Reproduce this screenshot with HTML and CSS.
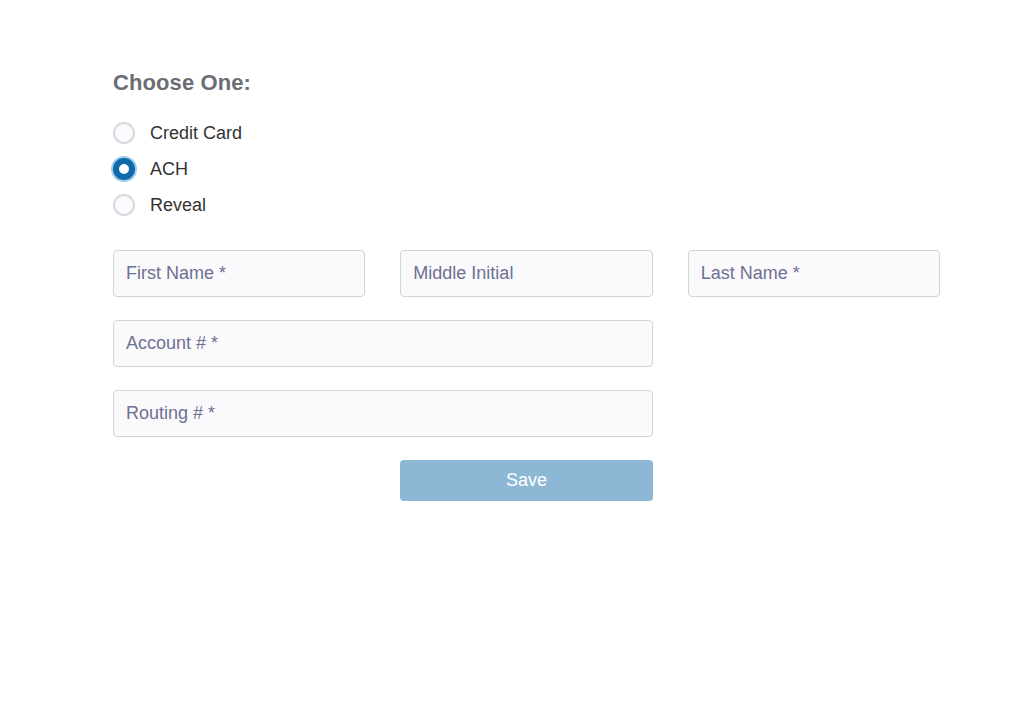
FILE: index.html
```html
<!DOCTYPE html>
<html>
<head>
<title>Payment Method</title>
<link rel="stylesheet" href="styles.css">
</head>
<body>

<form class="payment">
  <h3 class="title">Choose One:</h3>
  <div class="choices">
    <label class="choice"><input type="radio" name="method" value="card"> <span>Credit Card</span></label>
    <label class="choice"><input type="radio" name="method" value="ach" checked> <span>ACH</span></label>
    <label class="choice"><input type="radio" name="method" value="reveal"> <span>Reveal</span></label>
  </div>

  <div class="fields">
    <input type="text" class="field" placeholder="First Name *">
    <input type="text" class="field" placeholder="Middle Initial">
    <input type="text" class="field" placeholder="Last Name *">
    <input type="text" class="field wide" placeholder="Account # *">
    <input type="text" class="field wide" placeholder="Routing # *">
    <button type="button" class="save">Save</button>
  </div>
</form>

</body>
</html>
```

FILE: styles.css
```css
body {
  margin: 0;
  font-family: "Liberation Sans", Arial, sans-serif;
  background-color: #fff;
}
.payment {
  width: 827px;
  margin-left: 113px;
  padding-top: 70px;
}
.title {
  margin: 0 0 26px 0;
  font-size: 22px;
  font-weight: bold;
  color: #6b6d74;
  letter-spacing: 0.1px;
}
.choices {
  display: flex;
  flex-direction: column;
  gap: 14px;
}
.choice {
  display: flex;
  align-items: center;
  gap: 15px;
  font-size: 18px;
  color: #333;
  height: 22px;
}
.choice input {
  appearance: none;
  -webkit-appearance: none;
  margin: 0;
  width: 22px;
  height: 22px;
  border: 2px solid #d5d8de;
  border-radius: 50%;
  background-color: #fbfbfd;
  box-sizing: border-box;
}
.choice input:checked {
  border: 6px solid #0e6aa8;
  background-color: #fff;
  box-shadow: 0 0 0 2px #9fcbec;
}
.fields {
  display: grid;
  grid-template-columns: repeat(3, minmax(0, 1fr));
  column-gap: 35px;
  row-gap: 23px;
  margin-top: 34px;
}
.field {
  width: 100%;
  min-width: 0;
  height: 47px;
  box-sizing: border-box;
  border: 1px solid #d3d3d8;
  border-radius: 4px;
  background-color: #fafafc;
  padding: 0 12px;
  font-family: inherit;
  font-size: 18px;
  color: #333;
}
.field::placeholder {
  color: #6e7093;
}
.wide {
  grid-column: 1 / 3;
}
.save {
  grid-column: 2;
  height: 41px;
  border: none;
  border-radius: 4px;
  background-color: #8cb8d6;
  color: #fff;
  font-family: inherit;
  font-size: 18px;
  cursor: pointer;
}
```
